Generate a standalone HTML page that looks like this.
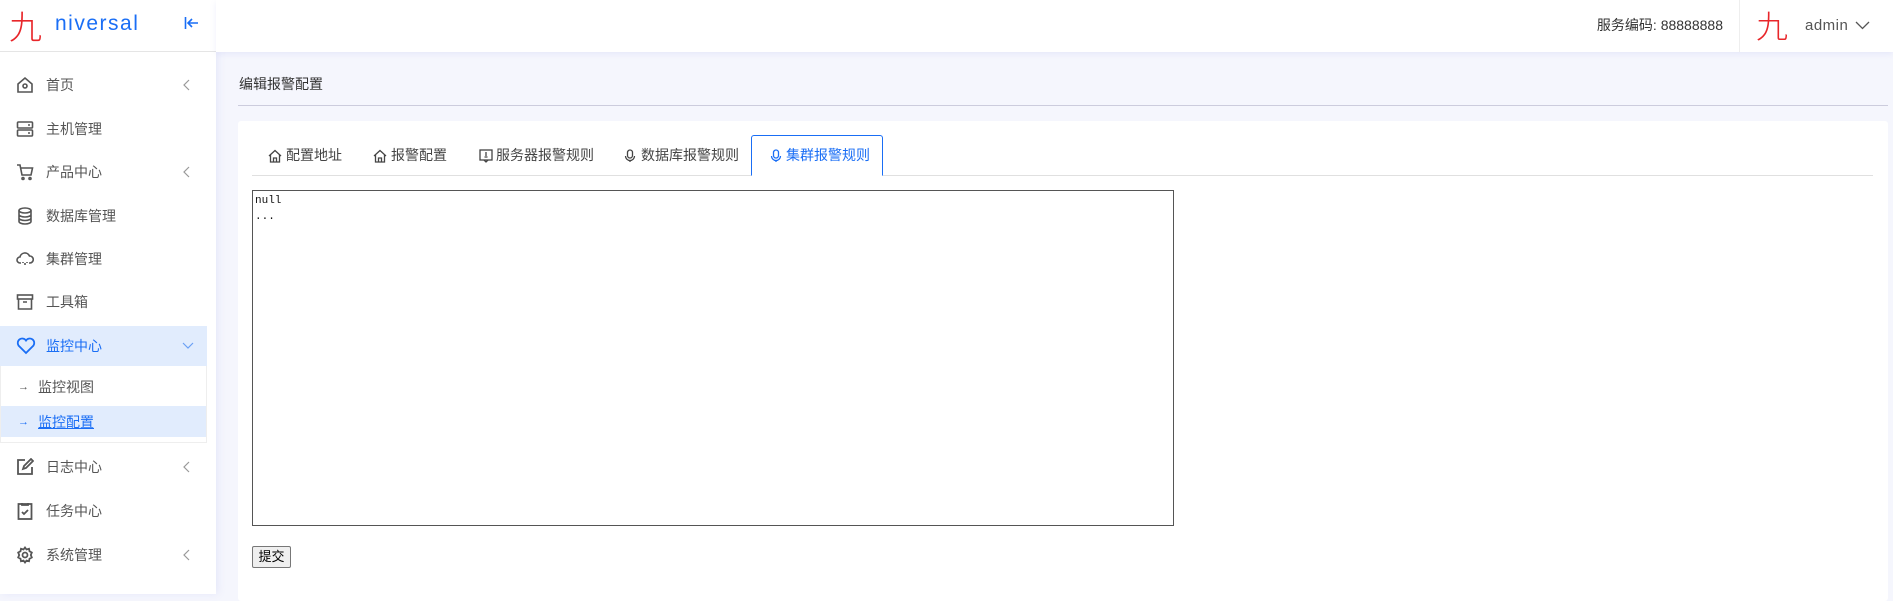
<!DOCTYPE html>
<html><head><meta charset="utf-8"><style>
*{margin:0;padding:0;box-sizing:border-box}
body{width:1893px;height:594px;overflow:hidden;background:#f5f6fd;font-family:"Liberation Sans","Noto Sans CJK SC",sans-serif;color:#555;font-size:14px;position:relative}
.abs{position:absolute}
.side{left:0;top:0;width:216px;height:594px;background:#fff;box-shadow:2px 0 8px rgba(120,130,220,.12)}
.head{left:216px;top:0;width:1677px;height:52px;background:#fff;box-shadow:0 2px 6px rgba(120,130,220,.12)}
.mi{position:absolute;left:0;width:207px;height:40px;line-height:40px;font-size:14px;color:#555}
.mi svg{position:absolute;left:16px;top:11px}
.mi .t{position:absolute;left:46px}
.mi svg.ar{left:182px;top:14px}
.tab{position:absolute;top:135px;height:41px;line-height:41px;font-size:14px;color:#444}
.tab svg{position:absolute;top:14px}
</style></head><body>
<div class="abs side">
 <div class="abs" style="left:9px;top:5px;font-size:33px;color:#e8262a;font-family:'Noto Sans CJK SC',sans-serif;line-height:40px;font-weight:300">九</div>
 <div class="abs" style="left:55px;top:12px;font-size:21px;color:#1a6ef5;letter-spacing:1.5px">niversal</div>
 <svg class="abs" style="left:184px;top:16px" width="16" height="14" viewBox="0 0 16 14"><path d="M1.5 1v12M14 7H4M8 3L4 7l4 4" stroke="#1a6ef5" stroke-width="1.6" fill="none"/></svg>
 <div class="abs" style="left:0;top:51px;width:216px;height:1px;background:#e5e5e5"></div>

 <div class="mi" style="top:65px"><svg width="18" height="18" viewBox="0 0 18 18" fill="none" stroke="#555" stroke-width="1.6"><path d="M2 8L9 2l7 6v8H2z"/><circle cx="9" cy="10" r="2"/></svg><span class="t">首页</span><svg class="ar" width="10" height="12" viewBox="0 0 10 12"><path d="M7 1L2 6l5 5" stroke="#999" stroke-width="1.2" fill="none"/></svg></div>
 <div class="mi" style="top:109px"><svg width="18" height="18" viewBox="0 0 18 18" fill="none" stroke="#555" stroke-width="1.6"><rect x="1.5" y="2" width="15" height="6" rx="1"/><rect x="1.5" y="10" width="15" height="6" rx="1"/><path d="M12 5h2M12 13h2"/></svg><span class="t">主机管理</span></div>
 <div class="mi" style="top:152px"><svg width="18" height="18" viewBox="0 0 18 18" fill="none" stroke="#555" stroke-width="1.6"><path d="M1 2h3l2 10h9l1.5-7H5"/><circle cx="7" cy="15.5" r="1"/><circle cx="14" cy="15.5" r="1"/></svg><span class="t">产品中心</span><svg class="ar" width="10" height="12" viewBox="0 0 10 12"><path d="M7 1L2 6l5 5" stroke="#999" stroke-width="1.2" fill="none"/></svg></div>
 <div class="mi" style="top:196px"><svg width="18" height="18" viewBox="0 0 18 18" fill="none" stroke="#555" stroke-width="1.6"><ellipse cx="9" cy="3.5" rx="6" ry="2.5"/><path d="M3 3.5v11c0 1.4 2.7 2.5 6 2.5s6-1.1 6-2.5v-11M3 7.5c0 1.4 2.7 2.5 6 2.5s6-1.1 6-2.5M3 11c0 1.4 2.7 2.5 6 2.5s6-1.1 6-2.5"/></svg><span class="t">数据库管理</span></div>
 <div class="mi" style="top:239px"><svg width="18" height="18" viewBox="0 0 18 18" fill="none" stroke="#555" stroke-width="1.6"><path d="M5 13H4a3 3 0 010-6 5 5 0 019.5-1A3.5 3.5 0 0114 13h-1M7 12v1M9 13v2M11 12v1"/></svg><span class="t">集群管理</span></div>
 <div class="mi" style="top:282px"><svg width="18" height="18" viewBox="0 0 18 18" fill="none" stroke="#555" stroke-width="1.6"><rect x="1.5" y="2" width="15" height="4"/><path d="M2.5 6v10h13V6M7 9h4"/></svg><span class="t">工具箱</span></div>
 <div class="mi" style="top:326px;background:#e1ecfd;color:#1a6ef5"><svg width="20" height="18" viewBox="0 0 20 18" fill="none" stroke="#1a6ef5" stroke-width="1.8"><path d="M10 16L2.5 8.5A4 4 0 0110 3.5a4 4 0 017.5 5z"/></svg><span class="t">监控中心</span><svg class="ar" style="top:16px" width="12" height="8" viewBox="0 0 12 8"><path d="M1 1l5 5 5-5" stroke="#6aa0f5" stroke-width="1.2" fill="none"/></svg></div>
 <div class="abs" style="left:0;top:366px;width:207px;height:77px;border:1px solid #eee;border-top:0;background:#fff"></div>
 <div class="mi" style="top:367px;color:#555"><span class="abs" style="left:18px;font-size:11px">→</span><span class="t" style="left:38px">监控视图</span></div>
 <div class="abs" style="left:1px;top:406px;width:205px;height:31px;background:#e1ecfd"></div>
 <div class="mi" style="top:402px;color:#1a6ef5"><span class="abs" style="left:18px;font-size:11px">→</span><span class="t" style="left:38px;text-decoration:underline">监控配置</span></div>
 <div class="mi" style="top:447px"><svg width="18" height="18" viewBox="0 0 18 18" fill="none" stroke="#555" stroke-width="1.8"><path d="M9 2H2v14h14V9"/><path d="M7 11l1-3 7-7 2 2-7 7z"/></svg><span class="t">日志中心</span><svg class="ar" width="10" height="12" viewBox="0 0 10 12"><path d="M7 1L2 6l5 5" stroke="#999" stroke-width="1.2" fill="none"/></svg></div>
 <div class="mi" style="top:491px"><svg width="18" height="18" viewBox="0 0 18 18" fill="none" stroke="#555" stroke-width="1.8"><rect x="2.5" y="2" width="13" height="15"/><path d="M6 1v2h6V1M6 10l2 2 4-4"/></svg><span class="t">任务中心</span></div>
 <div class="mi" style="top:535px"><svg width="18" height="18" viewBox="0 0 18 18" fill="none" stroke="#555" stroke-width="1.8"><circle cx="9" cy="9" r="2.5"/><path d="M9 1.5l1.5 2 2.5-.7.5 2.5 2.3 1.2-1 2.5 1 2.5-2.3 1.2-.5 2.5-2.5-.7L9 16.5l-1.5-2-2.5.7-.5-2.5-2.3-1.2 1-2.5-1-2.5L4.5 5.3 5 2.8l2.5.7z"/></svg><span class="t">系统管理</span><svg class="ar" width="10" height="12" viewBox="0 0 10 12"><path d="M7 1L2 6l5 5" stroke="#999" stroke-width="1.2" fill="none"/></svg></div>
</div>

<div class="abs head">
 <div class="abs" style="right:170px;top:0;line-height:50px;font-size:14px;color:#333">服务编码: 88888888</div>
 <div class="abs" style="left:1523px;top:0;width:1px;height:52px;background:#eee"></div>
 <div class="abs" style="left:1540px;top:5px;font-size:32px;color:#e8262a;font-family:'Noto Sans CJK SC',sans-serif;line-height:40px;font-weight:300">九</div>
 <div class="abs" style="left:1589px;top:1px;line-height:50px;font-size:15px;color:#555;letter-spacing:.5px">admin</div>
 <svg class="abs" style="left:1639px;top:21px" width="15" height="9" viewBox="0 0 15 9"><path d="M1 1l6.5 6.5L14 1" stroke="#555" stroke-width="1.3" fill="none"/></svg>
</div>

<div class="abs" style="left:239px;top:74px;font-size:14px;color:#333">编辑报警配置</div>
<div class="abs" style="left:238px;top:105px;width:1650px;height:1px;background:#ccd"></div>

<div class="abs" style="left:238px;top:121px;width:1650px;height:480px;background:#fff;border-radius:3px"></div>
<div class="abs" style="left:252px;top:175px;width:1621px;height:1px;background:#e0e0e0"></div>
<div class="abs" style="left:751px;top:135px;width:132px;height:41px;border:1px solid #1a6ef5;border-bottom:1px solid #fff;border-radius:3px 3px 0 0;background:#fff"></div>

<div class="tab" style="left:268px"><svg width="14" height="14" viewBox="0 0 14 14" fill="none" stroke="#444" stroke-width="1.3"><path d="M1 7L7 1.5 13 7M2.5 6v7h9V6M5.5 13V9h3v4"/></svg><span style="margin-left:18px">配置地址</span></div>
<div class="tab" style="left:373px"><svg width="14" height="14" viewBox="0 0 14 14" fill="none" stroke="#444" stroke-width="1.3"><path d="M1 7L7 1.5 13 7M2.5 6v7h9V6M5.5 13V9h3v4"/></svg><span style="margin-left:18px">报警配置</span></div>
<div class="tab" style="left:479px"><svg width="14" height="14" viewBox="0 0 14 14" fill="none" stroke="#444" stroke-width="1.3"><rect x="1" y="1" width="12" height="10"/><path d="M5 11l2 2 2-2M7 3v4M5.5 8h3"/></svg><span style="margin-left:17px">服务器报警规则</span></div>
<div class="tab" style="left:624px"><svg width="12" height="14" viewBox="0 0 12 14" fill="none" stroke="#444" stroke-width="1.3"><rect x="3.5" y="1" width="5" height="8" rx="2.5"/><path d="M1.5 7a4.5 4.5 0 009 0M6 11.5V13"/></svg><span style="margin-left:17px">数据库报警规则</span></div>
<div class="tab" style="left:770px;color:#1a6ef5"><svg width="12" height="14" viewBox="0 0 12 14" fill="none" stroke="#1a6ef5" stroke-width="1.3"><rect x="3.5" y="1" width="5" height="8" rx="2.5"/><path d="M1.5 7a4.5 4.5 0 009 0M6 11.5V13"/></svg><span style="margin-left:16px">集群报警规则</span></div>

<div class="abs" style="left:252px;top:190px;width:922px;height:336px;border:1px solid #555;background:#fff;font-family:'Liberation Mono',monospace;font-size:11px;color:#111;padding:2px 2px;line-height:16px">null<br>...</div>
<div class="abs" style="left:252px;top:546px;width:39px;height:22px;border:1px solid #777;background:#efefef;font-size:13px;color:#000;text-align:center;line-height:20px;border-radius:2px">提交</div>
</body></html>
